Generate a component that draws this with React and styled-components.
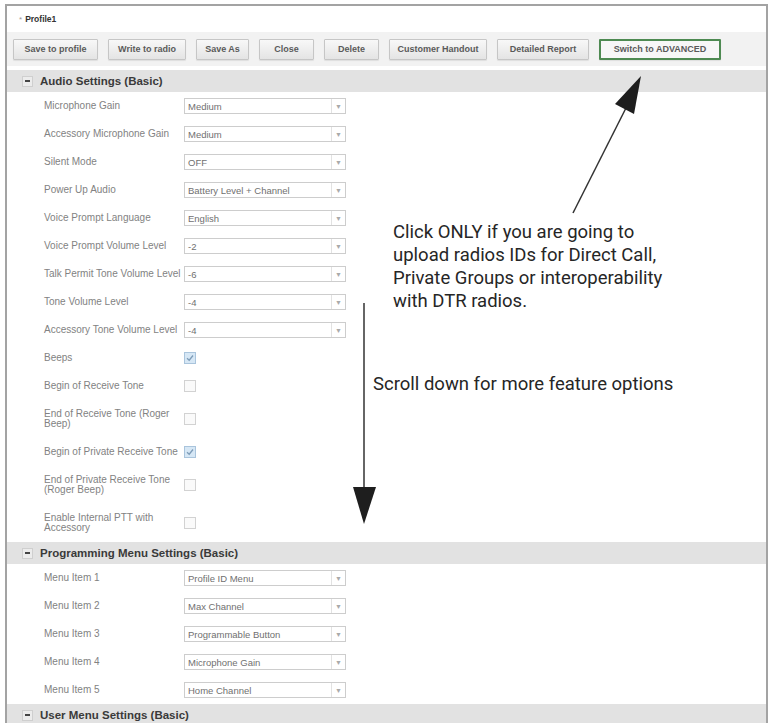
import styled, { createGlobalStyle } from "styled-components";

const GlobalStyle = createGlobalStyle`
    html, body {
        margin: 0;
        padding: 0;
        background: #fff;
        overflow: hidden;
    }
    body {
        font-family: "Liberation Sans", Arial, sans-serif;
    }
`;

const Page = styled.div`
    position: relative;
    width: 770px;
    height: 723px;
    overflow: hidden;
`;

const Frame = styled.div`
    margin: 4px 2px 0 5px;
    border: 2px solid #a3a3a3;
    border-bottom: none;
    background: #fff;
`;

const TitleBar = styled.div`
    height: 26px;
    display: flex;
    align-items: center;
    padding-left: 12px;
    font-size: 8.5px;
    color: #333;
`;

const Star = styled.span`
    color: #999;
    margin-right: 3px;
    font-size: 8px;
`;

const ProfileName = styled.span`
    font-weight: bold;
`;

const Toolbar = styled.div`
    display: flex;
    align-items: center;
    gap: 10px;
    height: 34px;
    padding-left: 6px;
    background: #f2f2f2;
    margin-bottom: 4px;
`;

const ToolButton = styled.button`
    width: ${(p) => p.$w}px;
    height: 21px;
    padding: 0;
    font-family: "Liberation Sans", Arial, sans-serif;
    font-size: 9px;
    font-weight: bold;
    color: #5a5a5a;
    background: ${(p) => (p.$accent ? "#f7f7f7" : "linear-gradient(#f8f8f8, #e4e4e4)")};
    border: ${(p) => (p.$accent ? "2px solid #4e8a52" : "1px solid #c6c6c6")};
    border-radius: 1px;
    box-shadow: 0 1px 1px rgba(0, 0, 0, 0.08);
`;

const SectionHeader = styled.div`
    height: 22px;
    display: flex;
    align-items: center;
    gap: 7px;
    padding-left: 15px;
    background: #e2e2e2;
    font-size: 11.5px;
    font-weight: bold;
    color: #3a3a3a;
`;

const Toggle = styled.span`
    width: 9px;
    height: 9px;
    display: flex;
    align-items: center;
    justify-content: center;
    background: #ececec;
    border: 1px solid #cfcfcf;
    &::after {
        content: "";
        width: 5px;
        height: 2px;
        background: #444;
    }
`;

const Row = styled.div`
    display: flex;
    align-items: center;
    min-height: 28px;
    box-sizing: border-box;
    padding: 9px 0 9px 37px;
`;

const Label = styled.div`
    width: 140px;
    font-size: 10px;
    line-height: 10px;
    color: #828282;
`;

const Select = styled.div`
    width: 162px;
    height: 16px;
    box-sizing: border-box;
    display: flex;
    border: 1px solid #cdcdcd;
    background: #fff;
    font-size: 9.5px;
    color: #707070;
    margin: -6px 0;
`;

const SelectValue = styled.div`
    flex: 1;
    display: flex;
    align-items: center;
    padding-left: 3px;
`;

const SelectArrow = styled.div`
    width: 13px;
    display: flex;
    align-items: center;
    justify-content: center;
    border-left: 1px solid #e2e2e2;
    color: #aaa;
    font-size: 7px;
`;

const Checkbox = styled.div`
    width: 12px;
    height: 12px;
    box-sizing: border-box;
    border: 1px solid ${(p) => (p.$on ? "#a9c4dc" : "#d2d2d2")};
    background: ${(p) => (p.$on ? "#d6e7f5" : "#fafafa")};
    display: flex;
    align-items: center;
    justify-content: center;
    margin: -4px 0;
`;

const Note = styled.div`
    position: absolute;
    left: ${(p) => p.$left}px;
    top: ${(p) => p.$top}px;
    font-family: Roboto, "Liberation Sans", sans-serif;
    font-size: 18.5px;
    line-height: 23px;
    color: #262626;
    white-space: pre;
`;

const Overlay = styled.svg`
    position: absolute;
    left: 0;
    top: 0;
    pointer-events: none;
`;

const buttons = [
    ["Save to profile", 85],
    ["Write to radio", 78],
    ["Save As", 53],
    ["Close", 55],
    ["Delete", 55],
    ["Customer Handout", 98],
    ["Detailed Report", 92],
];

const audioSelects = [
    ["Microphone Gain", "Medium"],
    ["Accessory Microphone Gain", "Medium"],
    ["Silent Mode", "OFF"],
    ["Power Up Audio", "Battery Level + Channel"],
    ["Voice Prompt Language", "English"],
    ["Voice Prompt Volume Level", "-2"],
    ["Talk Permit Tone Volume Level", "-6"],
    ["Tone Volume Level", "-4"],
    ["Accessory Tone Volume Level", "-4"],
];

const audioChecks = [
    ["Beeps", true],
    ["Begin of Receive Tone", false],
    ["End of Receive Tone (Roger Beep)", false],
    ["Begin of Private Receive Tone", true],
    ["End of Private Receive Tone (Roger Beep)", false],
    ["Enable Internal PTT with Accessory", false],
];

const menuItems = [
    "Profile ID Menu",
    "Max Channel",
    "Programmable Button",
    "Microphone Gain",
    "Home Channel",
];

function Dropdown({ value }) {
    return (
        <Select>
            <SelectValue>{value}</SelectValue>
            <SelectArrow>▼</SelectArrow>
        </Select>
    );
}

function Tick() {
    return (
        <svg width="8" height="8" viewBox="0 0 8 8">
            <path d="M1 4.2 L3.2 6.2 L7 1.5" fill="none" stroke="#7d9cb8" strokeWidth="1.3" />
        </svg>
    );
}

export default function App() {
    return (
        <Page>
            <GlobalStyle />
            <Frame>
                <TitleBar>
                    <Star>*</Star>
                    <ProfileName>Profile1</ProfileName>
                </TitleBar>
                <Toolbar>
                    {buttons.map(([text, w]) => (
                        <ToolButton key={text} $w={w}>{text}</ToolButton>
                    ))}
                    <ToolButton $w={122} $accent>Switch to ADVANCED</ToolButton>
                </Toolbar>

                <SectionHeader><Toggle />Audio Settings (Basic)</SectionHeader>
                {audioSelects.map(([label, value]) => (
                    <Row key={label}>
                        <Label>{label}</Label>
                        <Dropdown value={value} />
                    </Row>
                ))}
                {audioChecks.map(([label, on]) => (
                    <Row key={label}>
                        <Label>{label}</Label>
                        <Checkbox $on={on}>{on && <Tick />}</Checkbox>
                    </Row>
                ))}

                <SectionHeader><Toggle />Programming Menu Settings (Basic)</SectionHeader>
                {menuItems.map((value, i) => (
                    <Row key={value}>
                        <Label>Menu Item {i + 1}</Label>
                        <Dropdown value={value} />
                    </Row>
                ))}

                <SectionHeader><Toggle />User Menu Settings (Basic)</SectionHeader>
                <Row />
            </Frame>

            <Overlay width="770" height="723">
                <line x1="573" y1="213" x2="627" y2="106" stroke="#333" strokeWidth="1.5" />
                <polygon points="641,76 634,114 615,104" fill="#1e1e1e" />
                <line x1="364" y1="303" x2="364" y2="490" stroke="#333" strokeWidth="1.5" />
                <polygon points="353,487 376,487 364,524" fill="#1e1e1e" />
            </Overlay>

            <Note $left={393} $top={221}>
                {"Click ONLY if you are going to\nupload radios IDs for Direct Call,\nPrivate Groups or interoperability\nwith DTR radios."}
            </Note>
            <Note $left={373} $top={373}>Scroll down for more feature options</Note>
        </Page>
    );
}
